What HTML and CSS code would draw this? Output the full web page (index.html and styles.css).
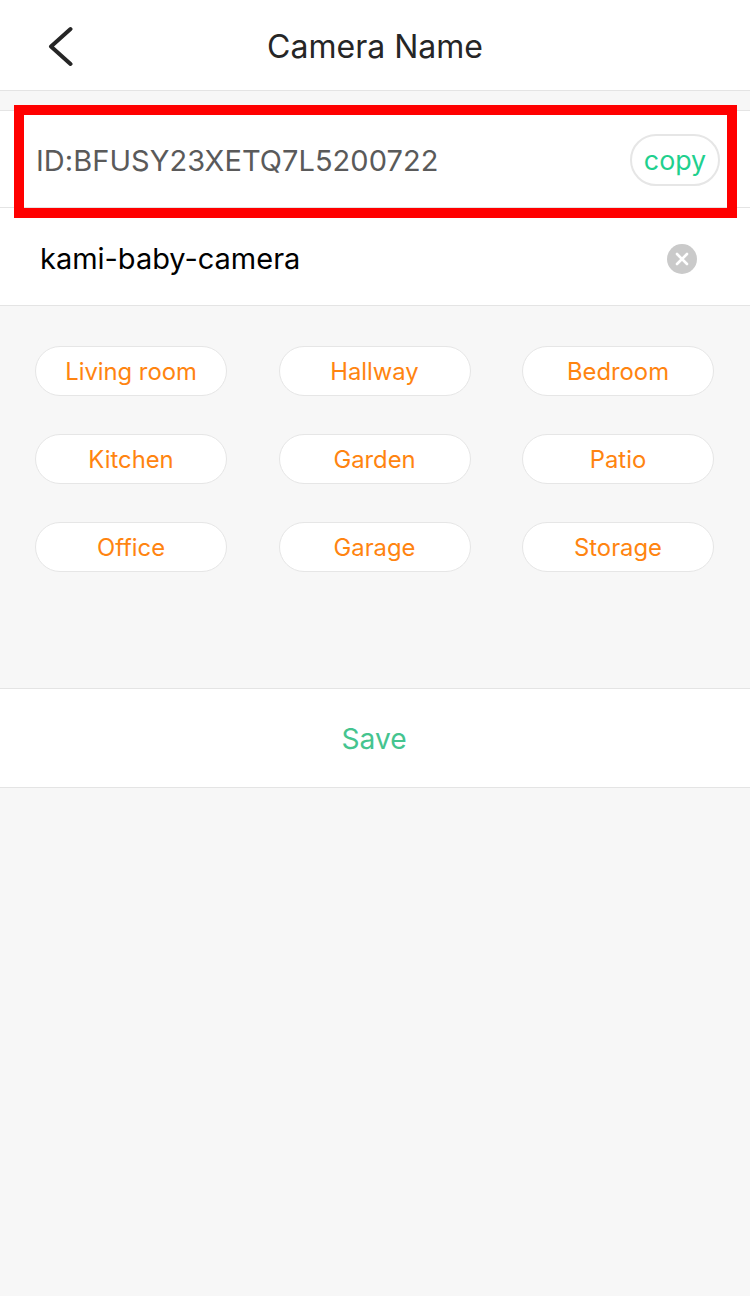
FILE: index.html
```html
<!DOCTYPE html>
<html lang="en">
<head>
<meta charset="utf-8">
<title>Camera Name</title>
<link rel="stylesheet" href="styles.css">
</head>
<body>
<header class="header">
  <svg class="back" width="26" height="42" viewBox="0 0 26 42"><path d="M23.5 3 L4 20.5 L23.5 38" fill="none" stroke="#262626" stroke-width="4" stroke-linecap="round" stroke-linejoin="round"/></svg>
  <h1 class="title">Camera Name</h1>
</header>
<section class="id-row">
  <span class="id-text">ID:BFUSY23XETQ7L5200722</span>
  <button class="copy">copy</button>
</section>
<section class="name-row">
  <span class="name-text">kami-baby-camera</span>
  <svg class="clear" width="30" height="30" viewBox="0 0 30 30"><circle cx="15" cy="15" r="15" fill="#cacaca"/><path d="M10 10 L20 20 M20 10 L10 20" stroke="#fff" stroke-width="2.6" stroke-linecap="round"/></svg>
</section>
<div class="tags">
  <span class="tag">Living room</span><span class="tag">Hallway</span><span class="tag">Bedroom</span>
  <span class="tag">Kitchen</span><span class="tag">Garden</span><span class="tag">Patio</span>
  <span class="tag">Office</span><span class="tag">Garage</span><span class="tag">Storage</span>
</div>
<div class="save">Save</div>
<div class="highlight"></div>
</body>
</html>
```

FILE: styles.css
```css
* { box-sizing: border-box; }
html, body { margin: 0; height: 100%; }
body {
  position: relative;
  height: 1296px;
  overflow: hidden;
  background: #f7f7f7;
  font-family: Inter, "Liberation Sans", sans-serif;
}
.header {
  height: 91px;
  background: #fff;
  border-bottom: 1px solid #e4e4e4;
  display: flex;
  align-items: center;
  justify-content: center;
  position: relative;
  padding-top: 2px;
}
.back { position: absolute; left: 47px; top: 26px; }
.title { margin: 0; font-size: 32px; font-weight: 400; color: #262626; }
.id-row {
  margin-top: 19px;
  height: 98px;
  background: #fff;
  border-top: 1px solid #e4e4e4;
  border-bottom: 1px solid #e4e4e4;
  display: flex;
  align-items: center;
  justify-content: space-between;
  padding: 2px 30px 0 36px;
}
.id-text { font-size: 29px; color: #5a5a5a; letter-spacing: 0.05px; }
.copy {
  width: 90px;
  height: 52px;
  padding: 0;
  border: 2px solid #e6e6e6;
  border-radius: 26px;
  background: #fff;
  color: #1fd08e;
  font: inherit;
  font-size: 26.8px;
}
.name-row {
  height: 98px;
  background: #fff;
  border-bottom: 1px solid #e4e4e4;
  display: flex;
  align-items: center;
  justify-content: space-between;
  padding: 3px 53px 0 40px;
}
.name-text { font-size: 29px; color: #000; letter-spacing: -0.02px; }
.clear { margin-top: 1px; }
.tags {
  display: grid;
  grid-template-columns: repeat(3, 192px);
  justify-content: space-between;
  gap: 38px 0;
  padding: 40px 36px 0 35px;
  height: 382px;
  align-content: start;
}
.tag {
  height: 50px;
  border: 1px solid #e6e6e6;
  border-radius: 25px;
  background: #fff;
  color: #ff8410;
  font-size: 23.8px;
  padding-top: 1px;
  display: flex;
  align-items: center;
  justify-content: center;
}
.save {
  height: 100px;
  background: #fff;
  border-top: 1px solid #e4e4e4;
  border-bottom: 1px solid #e4e4e4;
  display: flex;
  align-items: center;
  justify-content: center;
  color: #45c48f;
  font-size: 28.2px;
  padding: 1px 2px 0 0;
}
.highlight {
  position: absolute;
  left: 14px;
  top: 105px;
  width: 723px;
  height: 113px;
  border: 10px solid #ff0000;
}
```
